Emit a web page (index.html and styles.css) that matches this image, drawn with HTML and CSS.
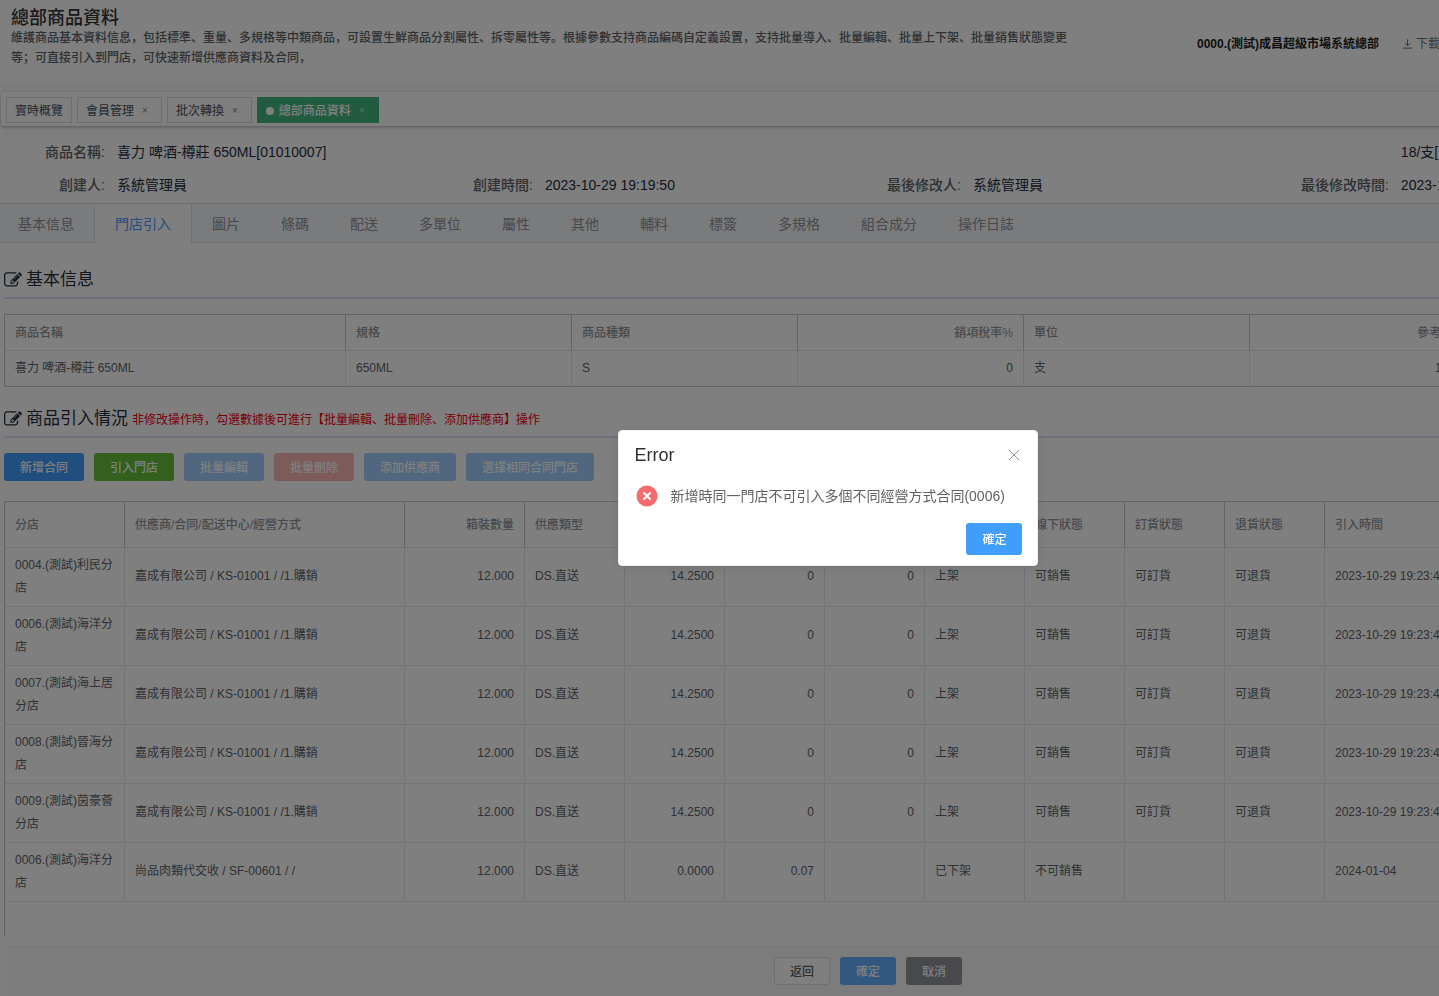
FILE: index.html
```html
<!DOCTYPE html>
<html lang="zh-CN">
<head>
<meta charset="utf-8">
<title>總部商品資料</title>
<link rel="stylesheet" href="styles.css">
</head>
<body>
<svg class="sprite" aria-hidden="true">
  <symbol id="icon-edit" viewBox="0 0 1792 1792"><path d="M888 1184l116-116-152-152-116 116v56h96v96h56zm440-720q-16-16-33 1l-350 350q-17 17-1 33t33-1l350-350q17-17 1-33zm80 594v190q0 119-84.5 203.5t-203.5 84.5h-832q-119 0-203.5-84.5t-84.5-203.5v-832q0-119 84.5-203.5t203.5-84.5h832q63 0 117 25 15 7 18 23 3 17-9 29l-49 49q-14 14-32 8-23-6-45-6h-832q-66 0-113 47t-47 113v832q0 66 47 113t113 47h832q66 0 113-47t47-113v-126q0-13 9-22l64-64q15-15 35-7t20 29zm-96-738l288 288-672 672h-288v-288zm444 132l-92 92-288-288 92-92q28-28 68-28t68 28l152 152q28 28 28 68t-28 68z"/></symbol>
</svg>
<div class="page">
  <header class="top">
    <div class="intro">
      <h1>總部商品資料</h1>
      <p>維護商品基本資料信息，包括標準、重量、多規格等中類商品，可設置生鮮商品分割屬性、拆零屬性等。根據參數支持商品編碼自定義設置，支持批量導入、批量編輯、批量上下架、批量銷售狀態變更等；可直接引入到門店，可快速新增供應商資料及合同，</p>
    </div>
    <strong class="org">0000.(測試)成昌超級市場系統總部</strong>
    <a class="download" href="#"><svg viewBox="0 0 12 12" aria-hidden="true"><path d="M6 1v7M3 5l3 3 3-3M1 10.500h10"/></svg>下載中心</a>
  </header>
  <nav class="tags">
    <a class="tag" href="#">實時概覽</a>
    <a class="tag closable" href="#">會員管理<span>×</span></a>
    <a class="tag closable" href="#">批次轉換<span>×</span></a>
    <a class="tag closable current" href="#"><i></i>總部商品資料<span>×</span></a>
  </nav>
  <dl class="info">
    <div class="wide"><dt>商品名稱:</dt><dd>喜力 啤酒-樽莊 650ML[01010007]</dd></div>
    <div><dt></dt><dd>18/支[18.00]</dd></div>
    <div><dt>創建人:</dt><dd>系統管理員</dd></div>
    <div><dt>創建時間:</dt><dd>2023-10-29 19:19:50</dd></div>
    <div><dt>最後修改人:</dt><dd>系統管理員</dd></div>
    <div><dt>最後修改時間:</dt><dd>2023-10-29</dd></div>
  </dl>
  <nav class="tabs">
    <button>基本信息</button><button class="active">門店引入</button><button>圖片</button><button>條碼</button><button>配送</button><button>多單位</button><button>屬性</button><button>其他</button><button>輔料</button><button>標簽</button><button>多規格</button><button>組合成分</button><button>操作日誌</button>
  </nav>
  <main>
    <h2 class="first"><svg aria-hidden="true"><use href="#icon-edit"/></svg>基本信息</h2>
    <table class="grid basic">
      <colgroup><col class="w-name"><col class="w-attr"><col class="w-attr"><col class="w-attr"><col class="w-attr"><col class="w-attr"><col></colgroup>
      <thead><tr><th>商品名稱</th><th>規格</th><th>商品種類</th><th class="num">銷項稅率%</th><th>單位</th><th class="num">參考售價</th><th></th></tr></thead>
      <tbody><tr><td>喜力 啤酒-樽莊 650ML</td><td>650ML</td><td>S</td><td class="num">0</td><td>支</td><td class="num">18.00</td><td></td></tr></tbody>
    </table>
    <h2><svg aria-hidden="true"><use href="#icon-edit"/></svg>商品引入情況<small>非修改操作時，勾選數據後可進行【批量編輯、批量刪除、添加供應商】操作</small></h2>
    <div class="actions">
      <button class="btn primary">新增合同</button>
      <button class="btn success">引入門店</button>
      <button class="btn primary" disabled>批量編輯</button>
      <button class="btn danger" disabled>批量刪除</button>
      <button class="btn primary" disabled>添加供應商</button>
      <button class="btn primary" disabled>選擇相同合同門店</button>
    </div>
    <div class="stores-box">
      <table class="grid stores">
        <colgroup><col class="w-store"><col class="w-supplier"><col class="w-store"><col class="w-cell"><col class="w-cell"><col class="w-cell"><col class="w-cell"><col class="w-cell"><col class="w-cell"><col class="w-cell"><col class="w-cell"><col></colgroup>
        <thead><tr><th>分店</th><th>供應商/合同/配送中心/經營方式</th><th class="num">箱裝數量</th><th>供應類型</th><th></th><th></th><th></th><th></th><th>線下狀態</th><th>訂貨狀態</th><th>退貨狀態</th><th>引入時間</th></tr></thead>
        <tbody>
          <tr><td>0004.(測試)利民分店</td><td>嘉成有限公司 / KS-01001 / /1.購銷</td><td class="num">12.000</td><td>DS.直送</td><td class="num">14.2500</td><td class="num">0</td><td class="num">0</td><td>上架</td><td>可銷售</td><td>可訂貨</td><td>可退貨</td><td>2023-10-29 19:23:45</td></tr>
          <tr><td>0006.(測試)海洋分店</td><td>嘉成有限公司 / KS-01001 / /1.購銷</td><td class="num">12.000</td><td>DS.直送</td><td class="num">14.2500</td><td class="num">0</td><td class="num">0</td><td>上架</td><td>可銷售</td><td>可訂貨</td><td>可退貨</td><td>2023-10-29 19:23:45</td></tr>
          <tr><td>0007.(測試)海上居分店</td><td>嘉成有限公司 / KS-01001 / /1.購銷</td><td class="num">12.000</td><td>DS.直送</td><td class="num">14.2500</td><td class="num">0</td><td class="num">0</td><td>上架</td><td>可銷售</td><td>可訂貨</td><td>可退貨</td><td>2023-10-29 19:23:45</td></tr>
          <tr><td>0008.(測試)晉海分店</td><td>嘉成有限公司 / KS-01001 / /1.購銷</td><td class="num">12.000</td><td>DS.直送</td><td class="num">14.2500</td><td class="num">0</td><td class="num">0</td><td>上架</td><td>可銷售</td><td>可訂貨</td><td>可退貨</td><td>2023-10-29 19:23:45</td></tr>
          <tr><td>0009.(測試)茵豪薈分店</td><td>嘉成有限公司 / KS-01001 / /1.購銷</td><td class="num">12.000</td><td>DS.直送</td><td class="num">14.2500</td><td class="num">0</td><td class="num">0</td><td>上架</td><td>可銷售</td><td>可訂貨</td><td>可退貨</td><td>2023-10-29 19:23:45</td></tr>
          <tr><td>0006.(測試)海洋分店</td><td>尚品肉類代交收 / SF-00601 / /</td><td class="num">12.000</td><td>DS.直送</td><td class="num">0.0000</td><td class="num">0.07</td><td></td><td>已下架</td><td>不可銷售</td><td></td><td></td><td>2024-01-04</td></tr>
        </tbody>
      </table>
    </div>
  </main>
  <footer class="bottom">
    <button class="btn plain">返回</button>
    <button class="btn confirm">確定</button>
    <button class="btn info-btn">取消</button>
  </footer>
</div>
<div class="mask"></div>
<div class="dialog-layer">
  <section class="dialog" role="alertdialog" aria-labelledby="dialog-title" aria-describedby="dialog-text">
    <div class="dialog-head">
      <h3 id="dialog-title">Error</h3>
      <button class="close" aria-label="關閉"><svg viewBox="0 0 12 12" aria-hidden="true"><path d="M1 1l10 10M11 1L1 11"/></svg></button>
    </div>
    <div class="dialog-body">
      <svg viewBox="0 0 22 22" aria-hidden="true"><circle cx="11" cy="11" r="10.500"/><path d="M7.500 7.500l7 7M14.500 7.500l-7 7"/></svg>
      <p id="dialog-text">新增時同一門店不可引入多個不同經營方式合同(0006)</p>
    </div>
    <div class="dialog-foot"><button class="btn primary">確定</button></div>
  </section>
</div>
</body>
</html>
```

FILE: styles.css
```css
* { box-sizing: border-box; }
body {
  margin: 0;
  overflow: hidden;
  background: #fff;
  color: #303133;
  font: 12px/20px "Liberation Sans", "Noto Sans CJK SC", sans-serif;
}
h1, h2, h3, p, dl, dd { margin: 0; }
button { font-family: inherit; cursor: pointer; }
a { color: inherit; text-decoration: none; }
.sprite { display: none; }

/* The layout is wider than the window and runs off its right edge. */
.page {
  display: flex;
  flex-direction: column;
  width: 120%;
  height: 100vh;
}

.top {
  display: flex;
  align-items: flex-start;
  flex: none;
  height: 83px;
  padding: 8px 11px 0;
}
.intro { flex: 0 1 1060px; color: #606266; font-weight: 500; }
.intro h1 { color: #303133; font-size: 18px; line-height: 20px; font-weight: 500; }
.org { margin: 26px 23px 0 126px; color: #222; white-space: nowrap; }
.download { display: flex; align-items: center; gap: 3px; margin-top: 26px; color: #707277; white-space: nowrap; }
.download svg { width: 11px; height: 12px; fill: none; stroke: #606266; }

.tags {
  display: flex;
  gap: 5px;
  flex: none;
  margin: 9px 0 0 1px;
  padding: 5px;
  height: 34px;
  background: #fff;
  box-shadow: 0 1px 3px rgba(0, 0, 0, .3), 0 -9px 0 #f7f8fb, 0 10px 0 #f9fafc;
}
.tag {
  display: flex;
  align-items: center;
  height: 26px;
  padding: 2px 8px 0;
  border: 1px solid #d8dce5;
  color: #495060;
  line-height: 22px;
}
.tag.closable { padding-right: 13px; }
.tag span { margin-left: 8px; font-size: 10px; color: #7c808a; }
.tag i { width: 8px; height: 8px; margin-right: 5px; border-radius: 50%; background: #fff; }
.tag.current { border-color: #42b983; background: #42b983; color: #fff; font-weight: 500; }
.tag.current span { color: #b5ddca; }

.info {
  display: grid;
  grid-template-columns: repeat(4, 1fr);
  flex: none;
  padding: 10px 15px 1px 0;
  font-size: 14px;
  line-height: 33px;
}
.info .wide { grid-column: span 3; }
.info div { display: flex; }
.info dt { width: 105px; margin-right: 12px; text-align: right; color: #606266; font-weight: 500; }
.info dd { color: #1f2d3d; }

.tabs {
  display: flex;
  flex: none;
  height: 40px;
  border-top: 1px solid #dcdfe6;
  border-bottom: 1px solid #e4e7ed;
  background: #f5f7fa;
}
.tabs button {
  height: 39px;
  padding: 0 20px;
  border: solid transparent;
  border-width: 0 1px 0 0;
  background: none;
  color: #909399;
  font-size: 14px;
  line-height: 38px;
}
.tabs button:first-child { padding-left: 18px; border-color: #dcdfe6; }
.tabs .active { border-color: #dcdfe6; background: #fff; color: #409eff; }

main {
  display: flex;
  flex-direction: column;
  flex: 1;
  min-height: 0;
  padding: 0 0 10px 4px;
}
h2 {
  display: flex;
  align-items: center;
  gap: 4px;
  flex: none;
  height: 36px;
  margin-top: 15px;
  border-bottom: 2px solid #d9e2f8;
  color: #1f2d3d;
  font-size: 17px;
  line-height: 36px;
  font-weight: 400;
}
h2.first { margin-top: 20px; }
h2 svg { width: 18px; height: 18px; fill: #1f2d3d; }
h2 small { padding-top: 2px; color: #f5000f; font-size: 12px; }
.grid { width: 100%; table-layout: fixed; border-spacing: 0; border: solid #c6c8cc; border-width: 1px 0 0 1px; }
.grid th, .grid td { padding: 0 10px; border: solid #e6e9f2; border-width: 0 1px 1px 0; text-align: left; color: #606266; line-height: 23px; }
.grid th { padding-top: 2px; border-right-color: #c6c8cc; color: #909399; font-weight: 500; }
.grid .num { text-align: right; }
.basic { margin-top: 15px; }
.basic th { height: 36px; }
.basic td { height: 36px; border-bottom-color: #c6c8cc; }
.w-name { width: 341px; }
.w-attr { width: 226px; }
.w-store { width: 120px; }
.w-supplier { width: 280px; }
.w-cell { width: 100px; }

.actions { display: flex; gap: 10px; flex: none; margin-top: 15px; }
.btn {
  height: 28px;
  padding: 2px 15px 0;
  border: 1px solid transparent;
  border-radius: 3px;
  color: #fff;
  font-size: 12px;
  line-height: 24px;
  font-weight: 500;
}
.primary { background: #409eff; }
.success { background: #67c23a; }
.primary:disabled { background: #a0cfff; }
.danger:disabled { background: #fab6b6; }
.plain { border-color: #dcdfe6; background: #fff; color: #606266; }
.confirm { background: #66b1ff; }
.info-btn { background: #909399; }

.stores-box { flex: 1; min-height: 0; margin-top: 20px; overflow: hidden; border-left: 1px solid #c6c8cc; }
.stores { border-left: 0; }
.stores th { height: 46px; }
.stores td { height: 59px; }
.stores td + td { padding-bottom: 2px; }

.bottom {
  display: flex;
  align-items: center;
  justify-content: center;
  gap: 10px;
  flex: none;
  height: 50px;
  margin-left: 7px;
  padding: 0 0 2px 2px;
  border-top: 1px solid #eee;
  background: #f9f9f9;
}

.mask { position: fixed; inset: 0; background: rgba(0, 0, 0, .5); }
.dialog-layer {
  position: fixed;
  top: 0;
  left: 0;
  display: flex;
  align-items: center;
  justify-content: center;
  width: 115%;
  height: 100%;
  padding-left: 2px;
}
.dialog {
  width: 420px;
  padding: 14px 15px 10px;
  border: 1px solid #ebeef5;
  border-radius: 4px;
  background: #fff;
  box-shadow: 0 2px 12px rgba(0, 0, 0, .1);
}
.dialog-head { display: flex; align-items: center; justify-content: space-between; }
.dialog-head h3 { color: #303133; font-size: 18px; line-height: 20px; font-weight: 400; }
.close { display: flex; padding: 2px; border: 0; background: none; }
.close svg { width: 12px; height: 12px; fill: none; stroke: #909399; }
.dialog-body { display: flex; align-items: center; gap: 12px; padding: 20px 2px 16px; color: #606266; font-size: 14px; line-height: 22px; }
.dialog-body svg { width: 22px; height: 22px; fill: #f56c6c; }
.dialog-body path { stroke: #fff; stroke-width: 2; }
.dialog-foot { display: flex; justify-content: flex-end; }
.dialog-foot .btn { height: 32px; line-height: 28px; }
```
